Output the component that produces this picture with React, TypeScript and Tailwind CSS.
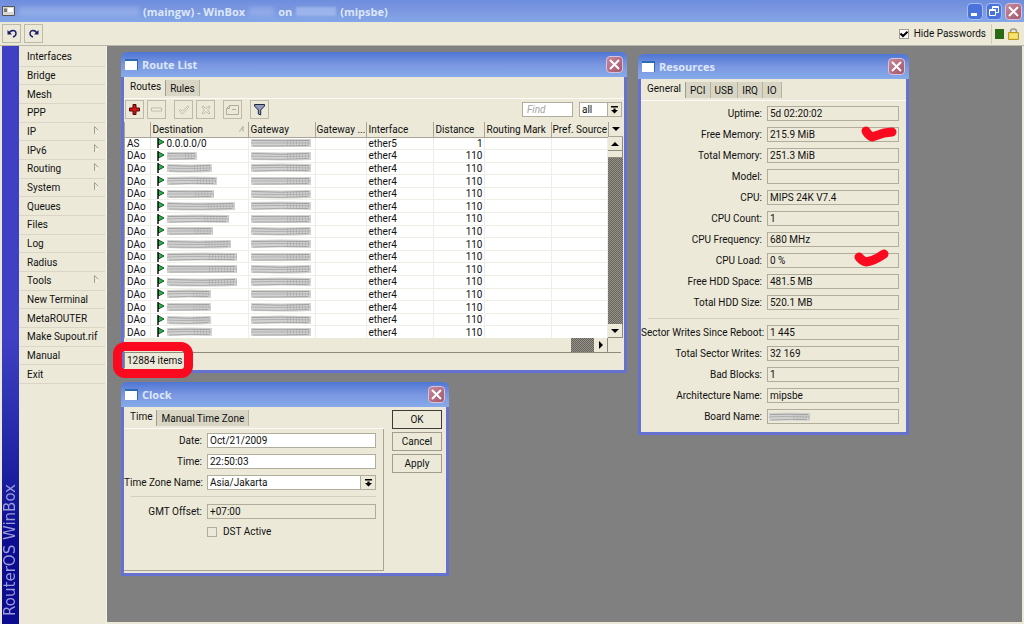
import type { ReactNode } from 'react';
import { clsx } from 'clsx';

const menuItems = [
  { label: 'Interfaces' },
  { label: 'Bridge' },
  { label: 'Mesh' },
  { label: 'PPP' },
  { label: 'IP', sub: true },
  { label: 'IPv6', sub: true },
  { label: 'Routing', sub: true },
  { label: 'System', sub: true },
  { label: 'Queues' },
  { label: 'Files' },
  { label: 'Log' },
  { label: 'Radius' },
  { label: 'Tools', sub: true },
  { label: 'New Terminal' },
  { label: 'MetaROUTER' },
  { label: 'Make Supout.rif' },
  { label: 'Manual' },
  { label: 'Exit' },
];

// width of the hidden destination in each row, 0 = shown as text
const destinations = [0, 30, 45, 50, 47, 68, 62, 46, 64, 70, 70, 70, 44, 44, 44, 45];

const resources = [
  { label: 'Uptime', value: '5d 02:20:02' },
  { label: 'Free Memory', value: '215.9 MiB', mark: 'free' },
  { label: 'Total Memory', value: '251.3 MiB' },
  { label: 'Model', value: '' },
  { label: 'CPU', value: 'MIPS 24K V7.4' },
  { label: 'CPU Count', value: '1' },
  { label: 'CPU Frequency', value: '680 MHz' },
  { label: 'CPU Load', value: '0 %', mark: 'load' },
  { label: 'Free HDD Space', value: '481.5 MB' },
  { label: 'Total HDD Size', value: '520.1 MB' },
];

const hardware = [
  { label: 'Sector Writes Since Reboot', value: '1 445' },
  { label: 'Total Sector Writes', value: '32 169' },
  { label: 'Bad Blocks', value: '1' },
  { label: 'Architecture Name', value: 'mipsbe' },
  { label: 'Board Name', value: '', smudge: true },
];

function Smudge({ width, seed = 0 }: { width: number; seed?: number }) {
  const d = seed % 3;
  return (
    <svg width={width} height="10" viewBox={`0 0 ${width} 10`} className="block shrink-0 overflow-visible" aria-hidden="true">
      <g className="blur-[0.6px]" fill="none">
        <path d={`M0 5 Q${width / 2} ${4 + d} ${width} 5`} stroke="#d2d2d2" strokeWidth="8" />
        <path d={`M1 2.500 Q${width / 2} ${2 + d} ${width - 2} 2.500`} stroke="#a2a2a2" strokeWidth="1" />
        <path d={`M0 5 Q${width / 3} ${4 + d} ${width - 1} 5`} stroke="#b0b0b0" strokeWidth="1" />
        <path d={`M2 8 Q${width / 2} ${7 + d} ${width - 3} 7.500`} stroke="#aaaaaa" strokeWidth="1" />
        <path d={`M${width * 0.6} 5 H${width}`} stroke="#8d8d8d" strokeWidth="6" strokeDasharray="1 2" opacity="0.3" />
      </g>
    </svg>
  );
}

function CloseButton() {
  return (
    <button
      aria-label="Close"
      className="flex h-[17px] w-[17px] items-center justify-center rounded-sm border border-[#d9c3dc] bg-linear-to-br from-[#c58a9c] to-[#a4566a]"
    >
      <svg width="11" height="11" viewBox="0 0 11 11" stroke="#fff" strokeWidth="2">
        <path d="M1 1 L10 10 M10 1 L1 10" />
      </svg>
    </button>
  );
}

function Window({ title, className, children }: { title: string; className: string; children: ReactNode }) {
  return (
    <section
      className={clsx(
        'absolute flex flex-col rounded-t-md border-x-[3px] border-b-[3px] border-[#6672d2] bg-[#ece9d8]',
        className,
      )}
    >
      <header className="-mx-[3px] flex h-[25px] shrink-0 items-center rounded-t-md bg-linear-to-b from-[#4f76d4] via-[#7a96e0] to-[#86abea] px-1">
        <span className="h-[11px] w-[13px] border-t-2 border-r border-[#2b6bb4] bg-white" />
        <h2 className="ml-1 flex-1 font-['Open_Sans',sans-serif] text-[11px] font-bold text-[#dce7fb]">{title}</h2>
        <CloseButton />
      </header>
      {children}
    </section>
  );
}

function Tabs({ items }: { items: string[] }) {
  return (
    <div className="flex h-[22px] shrink-0 items-end border-b border-[#fbfaf4]">
      {items.map((item, i) => (
        <button
          key={item}
          className={clsx(
            i === 0 ? 'h-[21px] pr-1 pl-[6px] pb-[3px]' : 'mb-[2px] h-4 border-r border-[#b5b2a2] bg-[#d8d5c4] px-1',
            i === 1 && 'border-l border-l-[#a09d8e]',
          )}
        >
          {item}
        </button>
      ))}
    </div>
  );
}

function ToolButton({ label, className, children }: { label: string; className?: string; children: ReactNode }) {
  return (
    <button
      aria-label={label}
      className={clsx('flex h-[19px] w-[19px] shrink-0 items-center justify-center border border-[#bdbaaa]', className)}
    >
      {children}
    </button>
  );
}

function DropArrow() {
  return (
    <svg width="7" height="8" viewBox="0 0 7 8" fill="#000">
      <path d="M0 0H7V1.4H0Z M2.4 2.4H4.6V4H7L3.5 7.6L0 4H2.4Z" />
    </svg>
  );
}

function Triangle({ dir }: { dir: 'up' | 'down' | 'right' }) {
  const d = { up: 'M0 4L4 0L8 4Z', down: 'M0 0H8L4 4Z', right: 'M2 0L6 4L2 8Z' }[dir];
  return (
    <svg width="8" height={dir === 'right' ? 8 : 4} fill="#000">
      <path d={d} />
    </svg>
  );
}

function CheckMark({ kind }: { kind: string }) {
  return (
    <svg
      width="38"
      height="18"
      viewBox="0 0 38 18"
      className="pointer-events-none absolute -top-px right-0 overflow-visible"
      fill="none"
      stroke="#fa0a1e"
      strokeWidth="9"
      strokeLinecap="round"
      strokeLinejoin="round"
    >
      <path d={kind === 'free' ? 'M5 5 Q7 9 11 11 Q17 9 23 7 L31 6' : 'M-2 5 Q1 9 5 10 Q13 9 23 2'} />
    </svg>
  );
}

function ResourceRow({ label, value, mark, smudge }: { label: string; value: string; mark?: string; smudge?: boolean }) {
  const id = label.toLowerCase().replace(/ /g, '-');
  return (
    <div className="flex items-center">
      <label htmlFor={id} className="w-[121px] shrink-0 text-right whitespace-nowrap">
        {label}:
      </label>
      <div className="relative ml-[5px] flex-1">
        <input id={id} readOnly defaultValue={value} className="block h-[15px] w-full border border-[#b0ad9d] px-[2px]" />
        {smudge && (
          <span className="absolute top-[3px] left-[2px]">
            <Smudge width={41} />
          </span>
        )}
        {mark && <CheckMark kind={mark} />}
      </div>
    </div>
  );
}

function RouteList() {
  return (
    <Window title="Route List" className="top-[6px] left-[14px] w-[506px]">
      <Tabs items={['Routes', 'Rules']} />
      <div className="flex h-[23px] items-start pt-px pr-[2px] pl-px">
        <ToolButton label="Add">
          <svg width="11" height="11" viewBox="0 0 11 11">
            <path d="M4 .5H7V4H10.500V7H7V10.500H4V7H.5V4H4Z" fill="#d41414" stroke="#4a0808" />
          </svg>
        </ToolButton>
        <ToolButton label="Remove" className="ml-[3px]">
          <svg width="11" height="5" viewBox="0 0 11 5">
            <path d="M.5 1H10.500V4H.5Z" fill="#f3f1e6" stroke="#bcb9aa" />
          </svg>
        </ToolButton>
        <ToolButton label="Enable" className="ml-2">
          <svg width="12" height="10" viewBox="0 0 12 10">
            <path d="M1 5.500L2.500 4.500L4.500 6.500L9.500 1L11 2L4.500 9Z" fill="#f3f1e6" stroke="#bcb9aa" />
          </svg>
        </ToolButton>
        <ToolButton label="Disable" className="ml-[3px]">
          <svg width="10" height="10" viewBox="0 0 10 10">
            <path d="M1 2L2 1L5 3.500L8 1L9 2L6.500 5L9 8L8 9L5 6.500L2 9L1 8L3.500 5Z" fill="#f3f1e6" stroke="#bcb9aa" />
          </svg>
        </ToolButton>
        <ToolButton label="Comment" className="ml-2">
          <svg width="13" height="10" viewBox="0 0 13 10" fill="none" stroke="#b0ad9e">
            <path d="M.5 3.500L3.500 .5H12.500V9.500H.5Z M3.500 .5V3.500H.5 M6 4.500H10" />
          </svg>
        </ToolButton>
        <ToolButton label="Filter" className="ml-2">
          <svg width="11" height="12" viewBox="0 0 11 12">
            <path d="M.5 .5H10.500V2L6.700 6V11L4.300 10V6L.5 2Z" fill="#8f9cc0" stroke="#20263c" />
          </svg>
        </ToolButton>
        <input
          aria-label="Find"
          placeholder="Find"
          className="mt-[2px] ml-auto h-[15px] w-[51px] border border-[#b0ad9d] bg-white px-1 italic placeholder:text-[#a5a5a5]"
        />
        <div className="relative mt-[2px] ml-[6px] h-[15px] w-[43px]">
          <select aria-label="Filter by" className="block h-full w-full appearance-none border border-[#b0ad9d] bg-white pl-[2px] leading-[12px]">
            <option>all</option>
          </select>
          <span className="pointer-events-none absolute inset-y-0 right-0 flex w-[15px] items-center justify-center border border-[#b0ad9d] bg-[#ece9d8]">
            <DropArrow />
          </span>
        </div>
      </div>

      <div className="flex h-[216px] pr-px">
        <div className="flex-1 overflow-hidden border-l border-[#a8a596] bg-white">
          <table className="h-[217px] w-full table-fixed border-collapse text-left">
            <thead>
              <tr className="h-[15px] bg-[#ece9d8]">
                <th className="w-[25px] border-r border-b border-[#a8a596] p-0" />
                <th className="w-[98px] border-r border-b border-[#a8a596] p-0 pl-[2px] font-normal">
                  <span className="flex items-center justify-between pr-1">
                    Destination
                    <svg width="5" height="6" viewBox="0 0 5 6" fill="none" stroke="#aaa798">
                      <path d="M.5 5.500L4 .5V5.500" />
                    </svg>
                  </span>
                </th>
                <th className="w-[67px] border-r border-b border-[#a8a596] p-0 pl-[2px] font-normal">Gateway</th>
                <th className="w-[51px] border-r border-b border-[#a8a596] p-0 pl-px font-normal whitespace-nowrap">Gateway ...</th>
                <th className="w-[67px] border-r border-b border-[#a8a596] p-0 pl-[2px] font-normal">Interface</th>
                <th className="w-[51px] border-r border-b border-[#a8a596] p-0 pl-[2px] font-normal">Distance</th>
                <th className="w-[67px] border-r border-b border-[#a8a596] p-0 pl-[2px] font-normal whitespace-nowrap">Routing Mark</th>
                <th className="border-b border-[#a8a596] p-0 pl-px font-normal whitespace-nowrap">Pref. Source</th>
              </tr>
            </thead>
            <tbody className="[&_td]:border-r [&_td]:border-b [&_td]:border-[#eeede6] [&_td]:p-0 [&_td]:leading-[11px]">
              {destinations.map((width, i) => (
                <tr key={i}>
                  <td>
                    <span className="pl-[2px]">{i === 0 ? 'AS' : 'DAo'}</span>
                  </td>
                  <td>
                    <span className="flex h-[11px] items-center gap-[2px] pl-[6px]">
                      <svg width="8" height="10" viewBox="0 0 8 10" className="shrink-0">
                        <path d="M1.500 1L7 4L1.500 7Z" fill="#2fb34a" stroke="#0e5a20" />
                        <path d="M1 0V10" stroke="#101010" strokeWidth="1.500" />
                      </svg>
                      {width === 0 ? '0.0.0.0/0' : <Smudge width={width} seed={i} />}
                    </span>
                  </td>
                  <td>
                    <span className="flex h-[11px] items-center pl-[2px]">
                      <Smudge width={60} seed={i + 1} />
                    </span>
                  </td>
                  <td />
                  <td>
                    <span className="pl-[2px]">{i === 0 ? 'ether5' : 'ether4'}</span>
                  </td>
                  <td className="text-right">
                    <span className="pr-px">{i === 0 ? '1' : '110'}</span>
                  </td>
                  <td />
                  <td />
                </tr>
              ))}
            </tbody>
          </table>
        </div>
        <div className="flex w-[15px] shrink-0 flex-col">
          <button aria-label="Columns" className="flex h-[15px] items-center justify-center border-b border-l border-[#a8a596]">
            <Triangle dir="down" />
          </button>
          <button aria-label="Scroll up" className="flex h-[14px] items-center justify-center border-r border-b border-[#8f8c7e]">
            <Triangle dir="up" />
          </button>
          <div className="h-[7px] border-r border-b border-[#8f8c7e]" />
          <div className="flex-1 bg-[repeating-conic-gradient(#66635d_0_25%,#96938a_0_50%)] bg-[length:2px_2px]" />
          <button aria-label="Scroll down" className="flex h-[14px] items-center justify-center border-r border-b border-[#8f8c7e]">
            <Triangle dir="down" />
          </button>
        </div>
      </div>
      <div className="flex h-[14px] pr-4">
        <div className="flex-1" />
        <div className="w-[23px] bg-[repeating-conic-gradient(#66635d_0_25%,#96938a_0_50%)] bg-[length:2px_2px]" />
        <button aria-label="Scroll right" className="flex w-[14px] items-center justify-center border-r border-[#8f8c7e]">
          <Triangle dir="right" />
        </button>
      </div>
      <footer className="mr-[3px] mb-[2px] flex h-4 items-center border-t border-l border-[#8f8c7e] pl-[2px]">12884 items</footer>

      {/* red pen ring round the item count */}
      <div className="pointer-events-none absolute -bottom-2 -left-[11px] h-9 w-20 rounded-xl border-[9px] border-[#fa0a1e]" />
    </Window>
  );
}

function Clock() {
  return (
    <Window title="Clock" className="top-[336px] left-[14px] w-[328px]">
      <div className="flex pb-[2px]">
        <div className="flex-1">
          <Tabs items={['Time', 'Manual Time Zone']} />
          <div className="flex h-[142px] flex-col gap-[6px] border-r border-b border-[#a8a596] pt-1 pr-[7px]">
            <div className="flex items-center">
              <label htmlFor="date" className="w-[78px] text-right">Date:</label>
              <input id="date" defaultValue="Oct/21/2009" className="ml-[5px] h-[15px] min-w-0 flex-1 border border-[#b0ad9d] bg-white px-[2px]" />
            </div>
            <div className="flex items-center">
              <label htmlFor="time" className="w-[78px] text-right">Time:</label>
              <input id="time" defaultValue="22:50:03" className="ml-[5px] h-[15px] min-w-0 flex-1 border border-[#b0ad9d] bg-white px-[2px]" />
            </div>
            <div className="flex items-center">
              <label htmlFor="zone" className="w-[78px] text-right whitespace-nowrap">Time Zone Name:</label>
              <div className="relative ml-[5px] h-[15px] flex-1">
                <select id="zone" className="block h-full w-full appearance-none border border-[#b0ad9d] bg-white pl-[2px] leading-[12px]">
                  <option>Asia/Jakarta</option>
                </select>
                <span className="pointer-events-none absolute inset-y-0 right-0 flex w-4 items-center justify-center border border-[#b0ad9d] bg-[#ece9d8]">
                  <DropArrow />
                </span>
              </div>
            </div>
            <hr className="ml-[7px] border-[#d3d0c0] pb-px" />
            <div className="flex items-center">
              <label htmlFor="offset" className="w-[78px] text-right">GMT Offset:</label>
              <input id="offset" readOnly defaultValue="+07:00" className="ml-[5px] h-[15px] min-w-0 flex-1 border border-[#b0ad9d] px-[2px]" />
            </div>
            <label className="flex items-center gap-[6px] pl-[83px]">
              <input type="checkbox" className="h-[10px] w-[10px] appearance-none border border-[#b0ad9d]" />
              DST Active
            </label>
          </div>
        </div>
        <div className="flex w-[62px] flex-col gap-[3px] pt-[3px] pr-1 pl-[8px]">
          <button className="h-[19px] border border-[#3c3a34]">OK</button>
          <button className="h-[19px] border border-[#a09d8e]">Cancel</button>
          <button className="h-[19px] border border-[#a09d8e]">Apply</button>
        </div>
      </div>
    </Window>
  );
}

function Resources() {
  return (
    <Window title="Resources" className="top-[8px] left-[531px] w-[271px]">
      <Tabs items={['General', 'PCI', 'USB', 'IRQ', 'IO']} />
      <div className="flex flex-col gap-[6px] pt-[5px] pr-[7px] pb-2">
        {resources.map((row) => (
          <ResourceRow key={row.label} {...row} />
        ))}
        <hr className="mt-[2px] ml-[7px] border-[#d3d0c0]" />
        {hardware.map((row) => (
          <ResourceRow key={row.label} {...row} />
        ))}
      </div>
    </Window>
  );
}

export default function App() {
  return (
    <div className="flex min-h-screen flex-col overflow-hidden bg-[#ece9d8] font-['Roboto',sans-serif] text-[10px] leading-[13px] text-[#111]">
      {/* Title bar */}
      <header className="flex h-[22px] items-center bg-linear-to-b from-[#6d8ddd] via-[#7d98e0] to-[#83a7e8] px-[2px] font-['Open_Sans',sans-serif] text-[11px] font-bold text-[#dce7fb]">
        <svg width="13" height="10" viewBox="0 0 13 10">
          <path d="M.5 .5H12.500V9.500H.5Z" fill="#d8d8d0" stroke="#555" />
          <path d="M2 2.500H5V6H2Z" fill="#777" />
          <path d="M6 2H11V6H6Z" fill="#fff" />
        </svg>
        <span className="ml-1 h-[9px] w-[120px] bg-[#9db6ec] opacity-60 blur-[2px]" />
        <h1 className="ml-1 flex items-center gap-1 whitespace-nowrap">
          (maingw) - WinBox
          <span className="h-[9px] w-[25px] bg-[#9db6ec] opacity-60 blur-[2px]" />
          on
          <span className="h-[9px] w-[40px] bg-[#a9bff0] opacity-70 blur-[1px]" />
          (mipsbe)
        </h1>
        <div className="ml-auto flex gap-[3px]">
          <button aria-label="Minimize" className="flex h-[17px] w-4 items-end rounded-sm border border-[#a9bdf2] bg-[#4a74dc] p-[3px]">
            <span className="h-[3px] w-[6px] bg-white" />
          </button>
          <button aria-label="Restore" className="flex h-[17px] w-4 items-center justify-center rounded-sm border border-[#a9bdf2] bg-[#4a74dc]">
            <svg width="10" height="10" viewBox="0 0 10 10" fill="none" stroke="#fff">
              <path d="M3.500 3V.5H9.500V6.500H7 M3 1.500H10 M.5 3.500H6.500V9.500H.5Z M0 4.500H7" />
            </svg>
          </button>
          <CloseButton />
        </div>
      </header>

      {/* Toolbar */}
      <div className="flex h-6 items-center border-b border-[#bab7a8] px-[2px]">
        <ToolButton label="Undo">
          <svg width="10" height="9" viewBox="0 0 10 9" fill="none" stroke="#1c1c6c" strokeWidth="1.400">
            <path d="M2 4.500C3.500 .5 9 .5 9 4.500C9 6.500 7.500 7.500 6 8" />
            <path d="M.5 1V5.500H5Z" fill="#1c1c6c" stroke="none" />
          </svg>
        </ToolButton>
        <ToolButton label="Redo" className="ml-[3px]">
          <svg width="10" height="9" viewBox="0 0 10 9" fill="none" stroke="#1c1c6c" strokeWidth="1.400">
            <path d="M8 4.500C6.500 .5 1 .5 1 4.500C1 6.500 2.500 7.500 4 8" />
            <path d="M9.500 1V5.500H5Z" fill="#1c1c6c" stroke="none" />
          </svg>
        </ToolButton>
        <label className="ml-auto flex items-center gap-[5px]">
          <span className="relative flex h-[10px] w-[10px]">
            <input type="checkbox" defaultChecked className="peer h-[10px] w-[10px] appearance-none border border-[#a09d8e] bg-white" />
            <svg width="8" height="7" viewBox="0 0 8 7" className="pointer-events-none absolute top-[2px] left-px hidden peer-checked:block" fill="none" stroke="#000" strokeWidth="2">
              <path d="M.5 2.500L3 5L7.500 .8" />
            </svg>
          </span>
          Hide Passwords
        </label>
        <span className="ml-[5px] h-5 w-px bg-[#cfccbc]" />
        <span className="ml-[3px] h-[10px] w-[9px] bg-[#2b6a14]" />
        <svg width="11" height="12" viewBox="0 0 11 12" className="mr-[3px] ml-1">
          <path d="M2.500 5V3.500Q2.500 1 5.500 1Q8.500 1 8.500 3.500V5" fill="none" stroke="#9a9a90" strokeWidth="1.500" />
          <path d="M.5 4.500H10.500V11.500H.5Z" fill="#f0d850" stroke="#b89a20" />
          <path d="M2 7H9 M2 9H9" stroke="#fbeea0" />
        </svg>
      </div>

      <div className="flex flex-1">
        <div className="ml-[2px] flex w-[17px] shrink-0 items-end justify-center bg-linear-to-b from-[#4040c4] from-50% to-[#0c0c90] to-85% pb-2">
          <span className="rotate-180 font-['DejaVu_Sans',sans-serif] text-[15px] leading-[17px] whitespace-nowrap text-[#9c9cd8] [writing-mode:vertical-rl]">
            RouterOS WinBox
          </span>
        </div>
        <nav className="w-[88px] shrink-0 border-r border-[#f6f4ea] pt-[2px]">
          <ul className="mr-px flex h-[336px] flex-col">
            {menuItems.map((item) => (
              <li key={item.label} className="flex flex-1 border-b border-[#d9d6c6]">
                <button className="flex flex-1 items-center justify-between pr-[6px] pl-2 text-left whitespace-nowrap">
                  {item.label}
                  {item.sub && (
                    <svg width="5" height="8" viewBox="0 0 5 8" fill="none" className="mb-1">
                      <path d="M.5 8V.5L4.500 4.500" stroke="#a3a093" />
                      <path d="M4.500 4.500L1.500 7.500" stroke="#fff" />
                    </svg>
                  )}
                </button>
              </li>
            ))}
          </ul>
        </nav>
        <main className="relative flex-1 border-r-2 border-b-2 border-[#ece9d8] bg-[#808080]">
          <RouteList />
          <Clock />
          <Resources />
        </main>
      </div>
    </div>
  );
}
